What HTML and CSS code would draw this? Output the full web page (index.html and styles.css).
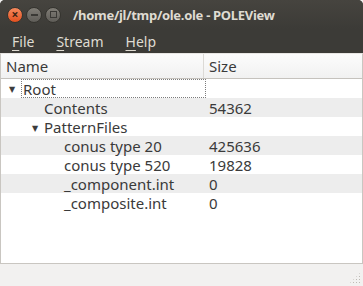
FILE: index.html
```html
<!DOCTYPE html>
<html lang="en">
<head>
	<meta charset="UTF-8">
	<title>POLEView</title>
	<link rel="stylesheet" href="styles.css">
</head>
<body>
	<div class="window">
		<div class="top">
			<div class="titlebar">
				<div class="buttons">
					<span class="btn close">&#215;</span>
					<span class="btn min"><i class="dash"></i></span>
					<span class="btn max"><i class="square"></i></span>
				</div>
				<div class="title">/home/jl/tmp/ole.ole - POLEView</div>
			</div>
			<ul class="menubar">
				<li><u>F</u>ile</li>
				<li><u>S</u>tream</li>
				<li><u>H</u>elp</li>
			</ul>
		</div>
		<div class="tree">
			<div class="header">
				<div class="col name">Name</div>
				<div class="col size">Size</div>
			</div>
			<div class="rows">
				<div class="row focus">
					<div class="cell lvl0"><span class="arrow">&#9660;</span><span class="label">Root</span></div>
					<div class="cell"></div>
				</div>
				<div class="row alt">
					<div class="cell lvl1">Contents</div>
					<div class="cell">54362</div>
				</div>
				<div class="row">
					<div class="cell lvl1b"><span class="arrow">&#9660;</span>PatternFiles</div>
					<div class="cell"></div>
				</div>
				<div class="row alt">
					<div class="cell lvl2">conus type 20</div>
					<div class="cell">425636</div>
				</div>
				<div class="row">
					<div class="cell lvl2">conus type 520</div>
					<div class="cell">19828</div>
				</div>
				<div class="row alt">
					<div class="cell lvl2">_component.int</div>
					<div class="cell">0</div>
				</div>
				<div class="row">
					<div class="cell lvl2">_composite.int</div>
					<div class="cell">0</div>
				</div>
			</div>
		</div>
		<div class="statusbar">
			<span class="grip"></span>
		</div>
	</div>
</body>
</html>
```

FILE: styles.css
```css
*{
	margin: 0;
	padding: 0;
	list-style: none;
	box-sizing: border-box;
}
body,html{
	width: 100%;
	height: 100%;
	overflow: hidden;
	background: #f2f1f0;
}
body{
	font-family: "Noto Sans", "DejaVu Sans", sans-serif;
	font-size: 15px;
	color: #3a3a3a;
}
.window{
	width: 363px;
	height: 286px;
	display: flex;
	flex-direction: column;
}
.top{
	height: 53px;
	background: #3c3b37;
	border-radius: 5px 5px 0 0;
}
.titlebar{
	height: 29px;
	display: flex;
	align-items: center;
	background: linear-gradient(#46443f, #3c3b37);
	border-radius: 5px 5px 0 0;
}
.buttons{
	display: flex;
	gap: 3px;
	padding-left: 7px;
	width: 73px;
}
.btn{
	width: 16px;
	height: 16px;
	border-radius: 50%;
	display: flex;
	align-items: center;
	justify-content: center;
	background: linear-gradient(#807d76, #5f5d58);
	border: 1px solid #35342f;
}
.close{
	background: linear-gradient(#f58a5e, #e3501f);
	color: #3c2414;
	font-size: 12px;
	font-weight: bold;
	line-height: 1;
}
.dash{
	width: 7px;
	height: 2px;
	background: #3a3935;
}
.square{
	width: 7px;
	height: 7px;
	border: 1px solid #3a3935;
}
.title{
	color: #dfdbd2;
	font-weight: bold;
	font-size: 13px;
	letter-spacing: -0.3px;
	white-space: nowrap;
}
.menubar{
	height: 24px;
	display: flex;
	align-items: center;
	color: #dfdbd2;
	font-size: 14px;
	padding-left: 12px;
	gap: 22px;
}
.menubar u{
	text-underline-offset: 3px;
}
.tree{
	flex: 1;
	background: #fff;
	border: 1px solid #c9c6c1;
	border-top: 1px solid #e8e6e3;
}
.header{
	height: 25px;
	display: grid;
	grid-template-columns: 203px 1fr;
	background: linear-gradient(#fcfcfc, #f1f1f1);
	border-bottom: 1px solid #c5c2bd;
}
.col{
	display: flex;
	align-items: center;
	padding-left: 5px;
}
.col.name{
	border-right: 1px solid #dcdad6;
}
.row{
	height: 19px;
	display: grid;
	grid-template-columns: 203px 1fr;
}
.row.alt{
	background: #ededed;
}
.cell{
	display: flex;
	align-items: center;
	white-space: nowrap;
	padding-left: 5px;
}
.arrow{
	font-size: 8px;
	width: 12px;
	color: #3c3c3c;
}
.lvl0{
	padding-left: 8px;
}
.focus .label{
	height: 19px;
	display: flex;
	align-items: center;
	padding-left: 1px;
	flex: 1;
	border: 1px dotted #7c7c7c;
	margin-right: -2px;
}
.lvl1{
	padding-left: 43px;
}
.lvl1b{
	padding-left: 31px;
}
.lvl2{
	padding-left: 63px;
}
.statusbar{
	height: 22px;
	position: relative;
	background: #f2f1f0;
}
.grip{
	position: absolute;
	right: 2px;
	bottom: 2px;
	width: 12px;
	height: 12px;
	background: radial-gradient(circle, #bdbab4 0.8px, transparent 1px) 0 0 / 3px 3px;
	clip-path: polygon(100% 0, 100% 100%, 0 100%);
}
```
